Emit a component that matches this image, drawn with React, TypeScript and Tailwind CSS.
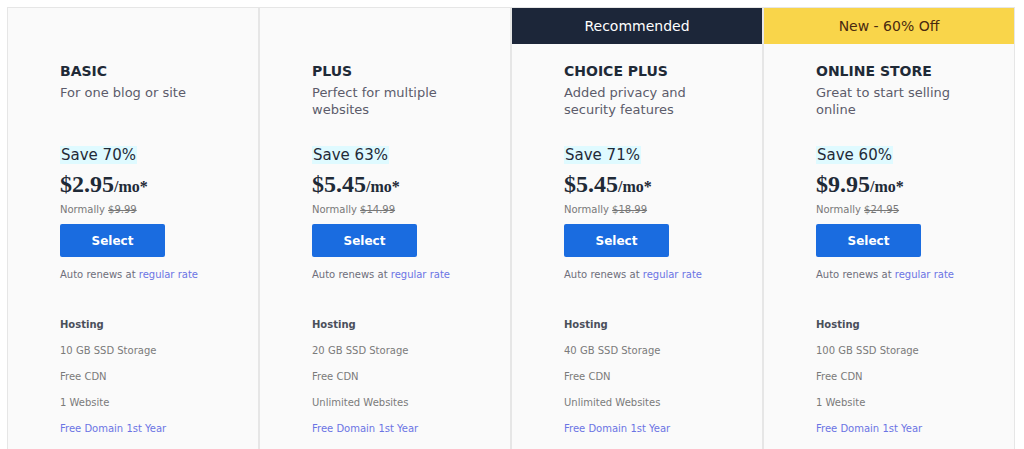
const plans = [
  {
    name: 'BASIC',
    desc: 'For one blog or site',
    save: 'Save 70%',
    price: '$2.95',
    normal: '$9.99',
    storage: '10 GB SSD Storage',
    sites: '1 Website',
  },
  {
    name: 'PLUS',
    desc: 'Perfect for multiple websites',
    save: 'Save 63%',
    price: '$5.45',
    normal: '$14.99',
    storage: '20 GB SSD Storage',
    sites: 'Unlimited Websites',
  },
  {
    name: 'CHOICE PLUS',
    desc: 'Added privacy and security features',
    save: 'Save 71%',
    price: '$5.45',
    normal: '$18.99',
    storage: '40 GB SSD Storage',
    sites: 'Unlimited Websites',
    badge: 'Recommended',
  },
  {
    name: 'ONLINE STORE',
    desc: 'Great to start selling online',
    save: 'Save 60%',
    price: '$9.95',
    normal: '$24.95',
    storage: '100 GB SSD Storage',
    sites: '1 Website',
    badge: 'New - 60% Off',
  },
]

function Badge({ text }: { text?: string }) {
  if (text === 'Recommended') {
    return (
      <div className="h-[36px] bg-[#1c2639] text-white text-[14px] flex items-center justify-center">
        {text}
      </div>
    )
  }
  if (text) {
    return (
      <div className="h-[36px] bg-[#f9d54a] text-[#4a2a10] text-[14px] flex items-center justify-center">
        {text}
      </div>
    )
  }
  return <div className="h-[36px]" />
}

export default function App() {
  return (
    <div className="w-[1024px] h-[449px] overflow-hidden bg-white pt-[7px] pl-[7px]">
      <div
        className="w-[1008px] grid grid-cols-[250px_252px_252px_252px] border border-[#e6e6e6] bg-[#fafafa]"
        style={{ fontFamily: '"DejaVu Sans", sans-serif' }}
      >
        {plans.map((p, i) => (
          <div key={p.name} className={i > 0 ? 'border-l-2 border-[#e6e6e6]' : ''}>
            <Badge text={p.badge} />
            <div className="pl-[52px] pr-[36px] pt-[17px] pb-[40px]">
              <div className="text-[14px] leading-[20px] font-bold text-[#1f2a37]">{p.name}</div>
              <div className="mt-[3px] h-[34px] text-[13px] leading-[17px] text-[#5c5c6b]">{p.desc}</div>
              <div className="mt-[28px] leading-[17px]">
                <span className="bg-[#dffaff] text-[15px] text-[#1f2a37] px-[1px]">{p.save}</span>
              </div>
              <div
                className="mt-[7px] leading-[26px] font-bold text-[#1f2a37]"
                style={{ fontFamily: '"Liberation Serif", serif' }}
              >
                <span className="text-[24px]">{p.price}</span>
                <span className="text-[16px]">/mo*</span>
              </div>
              <div className="mt-[3px] text-[10px] leading-[14px] text-[#787878]">
                Normally <span className="line-through">{p.normal}</span>
              </div>
              <button className="mt-[7px] w-[105px] h-[33px] bg-[#1a6ce0] rounded-[2px] text-white text-[12px] font-bold">
                Select
              </button>
              <div className="mt-[11px] text-[10px] leading-[14px] text-[#6e6e7a]">
                Auto renews at <span className="text-[#6b74e4]">regular rate</span>
              </div>
              <div className="mt-[36px] text-[10px] leading-[14px] font-bold text-[#4a4f5a]">Hosting</div>
              <div className="mt-[12px] flex flex-col gap-[12px] text-[10px] leading-[14px] text-[#7a7a7a]">
                <div>{p.storage}</div>
                <div>Free CDN</div>
                <div>{p.sites}</div>
                <div className="text-[#6b74e4]">Free Domain 1st Year</div>
              </div>
            </div>
          </div>
        ))}
      </div>
    </div>
  )
}
